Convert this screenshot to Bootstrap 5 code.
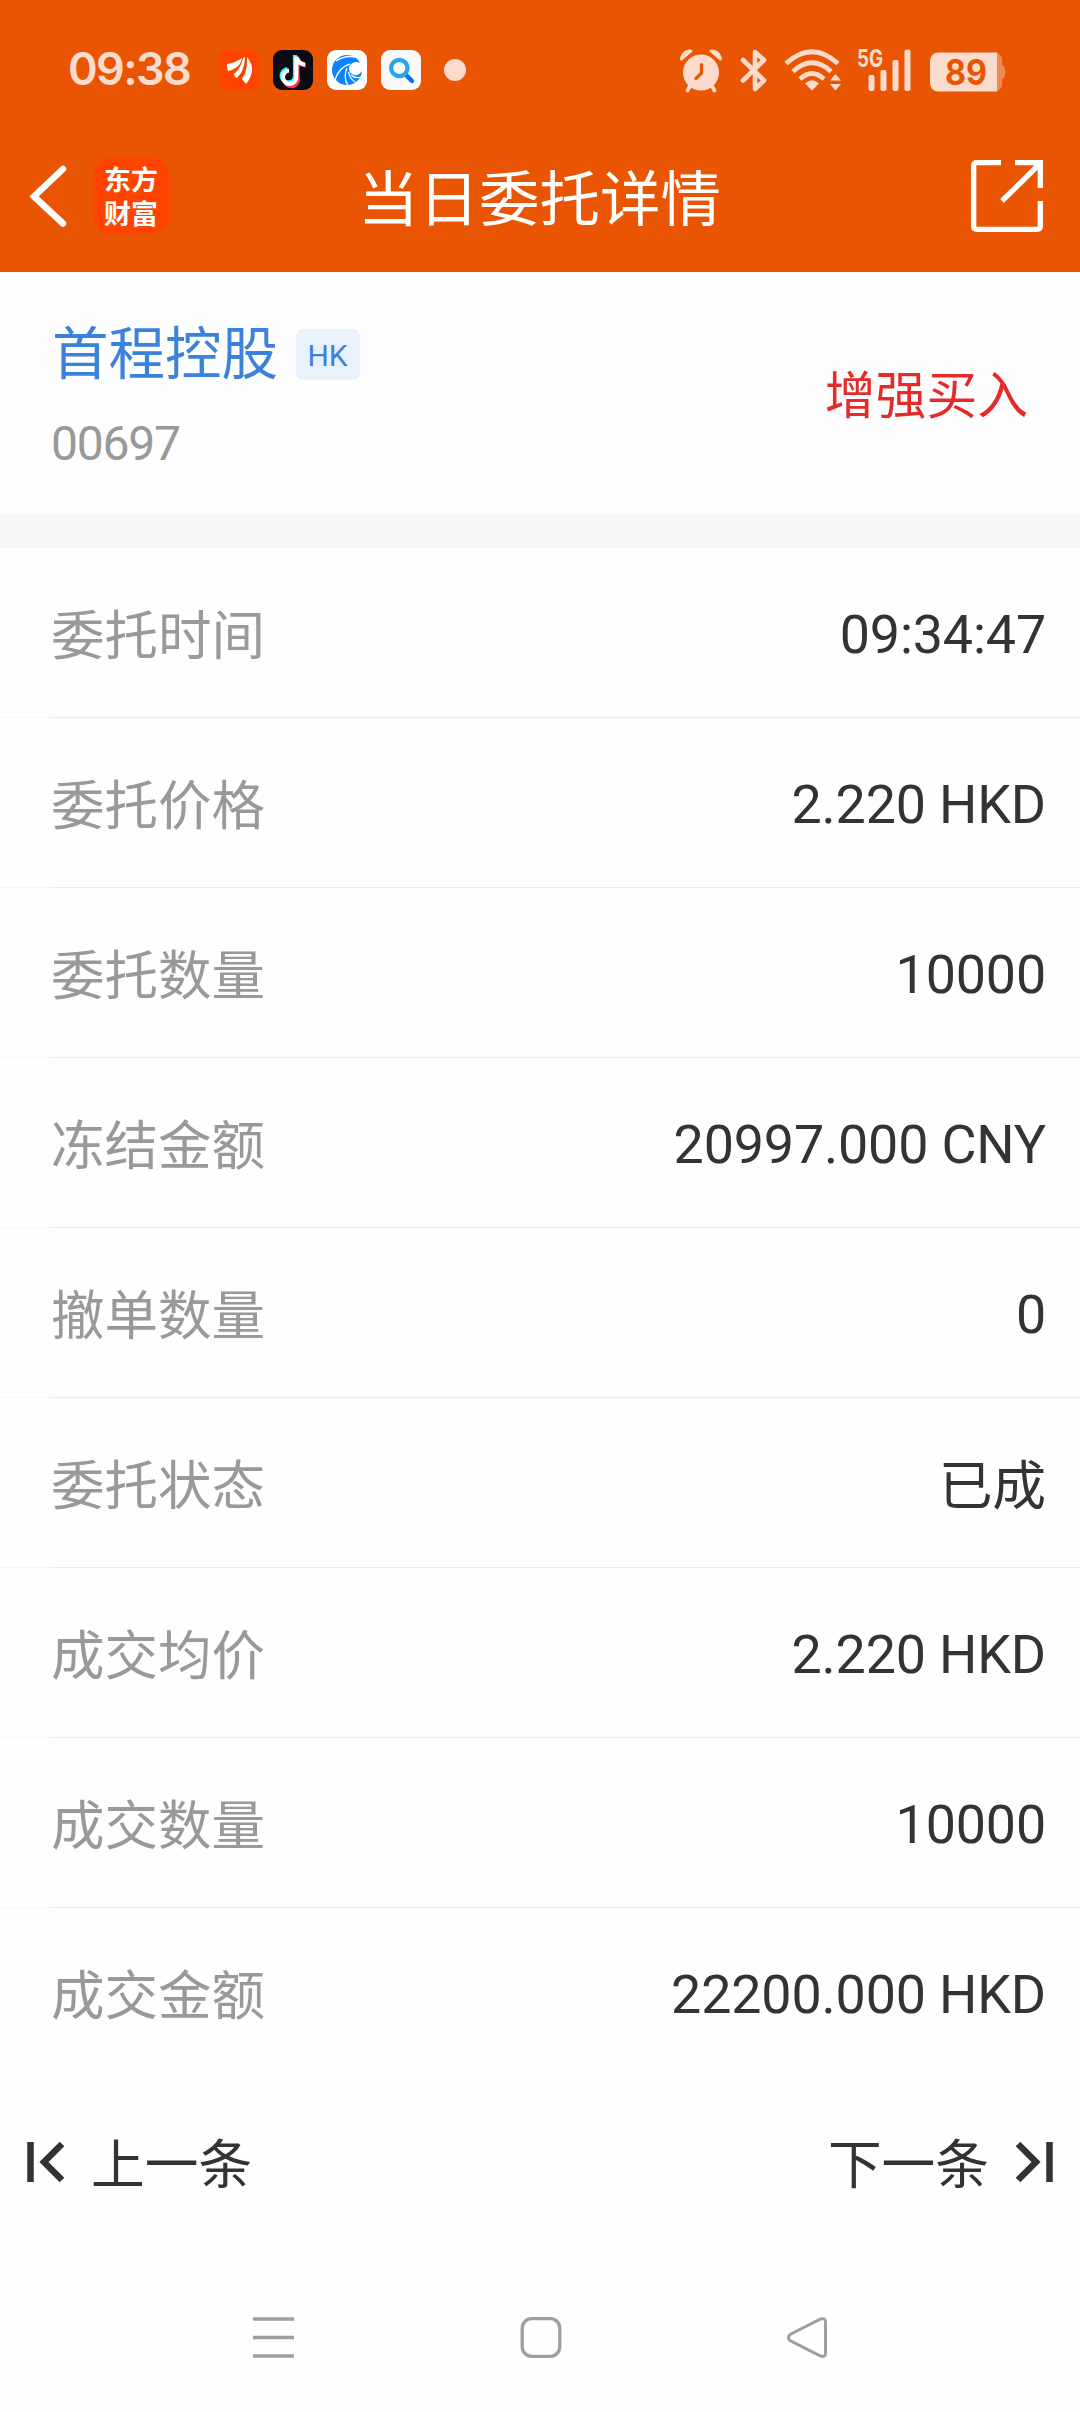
<!DOCTYPE html>
<html lang="zh-CN">
<head>
<meta charset="utf-8">
<meta name="viewport" content="width=device-width, initial-scale=1">
<title>当日委托详情</title>
<link href="https://cdn.jsdelivr.net/npm/bootstrap@5.3.0/dist/css/bootstrap.min.css" rel="stylesheet">
<style>
  body { font-family: Roboto, "Noto Sans CJK SC", sans-serif; background: #fefefe; color: #333; width: 1080px; height: 2412px; overflow: hidden; line-height: 1; }
  svg { display: block; flex: none; overflow: visible; }
  .top-area { background: #ea5504; height: 272px; }
  .status-bar { height: 112px; padding: 31px 75px 0 68px; color: #fbdccc; }
  .clock { font-family: Inter, sans-serif; font-weight: 600; font-size: 45px; letter-spacing: -1.6px; width: 151px; line-height: 80px; margin-top: -2px; }
  .status-bar svg text { font-family: Inter, Roboto, sans-serif; }
  .title-bar { height: 160px; padding: 0 37px 0 30px; }
  .title-side { width: 200px; }
  .title-text { font-size: 60.5px; line-height: 80px; margin: 49px 1px 0 0; }
  .brand-tile { width: 76px; height: 76px; border-radius: 18px; background: #ff4400; font-size: 27px; line-height: 34px; font-weight: 700; font-family: "Noto Sans CJK SC", sans-serif; margin-left: 26px; padding-top: 4px; }
  .stock-head { height: 242px; padding: 8px 52px 0; }
  .stock-name { font-size: 56.500px; line-height: 64px; color: #3a82dc; }
  .hk-tag { width: 64px; height: 51px; border-radius: 7px; background: #e9f1fc; color: #3a82dc; font-size: 30px; margin-left: 18px; padding: 2px 1px 0 0; }
  .stock-code { font-size: 48px; letter-spacing: -1.2px; line-height: 56px; color: #999; margin: 29px 0 0 -1px; }
  .side-text { font-size: 50.8px; color: #e52a2a; }
  .band { height: 34px; background: #f6f8fa; }
  .detail-row { height: 170px; padding: 5px 34px 0 51px; font-size: 53.8px; letter-spacing: -.15px; border-bottom: 1px solid #ececec; border-image: linear-gradient(to right, #f6f6f6 51px, #ececec 51px) 1; }
  .detail-row:last-child { border-color: transparent; border-image: none; }
  .detail-label { font-size: 53.5px; letter-spacing: 0; color: #999; padding-top: 4px; }
  .detail-cjk { padding-top: 3px; }
  .pager { height: 168px; padding: 0 27px; font-size: 53.7px; }
  .pager span { padding-top: 8px; }
  .nav-keys { height: 166px; padding: 71px 252px 0 253px; }
</style>
</head>
<body>
<header class="top-area text-white">
  <div class="status-bar d-flex align-items-start justify-content-between">
    <div class="d-flex align-items-center">
      <span class="clock">09:38</span>
      <div class="d-flex align-items-center" style="gap:14px">
        <svg width="40" height="40" viewBox="0 0 40 40"><rect width="40" height="40" rx="9" fill="#ff4400"/><g fill="#fff"><path d="M8 14Q16 13 23 8Q22 14 18 17Q14 20 9 21Q8 18 8 14Z"/><path d="M24 8L26 7Q26 15 22 23L18 28Q16 28 15 24Q22 18 24 8Z"/><path d="M28 7Q33 13 33 19Q33 27 27 34L23 29Q29 20 28 7Z"/></g></svg>
        <svg width="40" height="40" viewBox="0 0 40 40"><rect width="40" height="40" rx="9" fill="#0b0a15"/><g fill="none" stroke-width="4.200"><path stroke="#25f4ee" d="M22 5V26A6.700 6.700 0 1 1 14.500 19M22 7Q23 13 30 13.500"/><path stroke="#fe2c55" d="M24.500 8V27A6.700 6.700 0 0 1 12 32M25 9Q27 15 33 15.500"/><path stroke="#fff" d="M23.300 6.500V26.500A6.700 6.700 0 1 1 16 20.500M23.300 7Q25 14 32 14.500"/></g></svg>
        <svg width="40" height="40" viewBox="0 0 40 40"><rect width="40" height="40" rx="9" fill="#fff"/><path fill="#0a84ff" d="M33 13Q29 5 20 5A15 15 0 1 0 35 21Q32 26 27 25Q21 23 22 17Q26 10 33 13Z"/><g fill="none" stroke="#fff" stroke-width="1.300"><path d="M23 14Q12 17 8 30M20 18Q16 27 21 36M21.500 22Q23 30 30 33M24 25Q28 29 34 27M9 11Q18 5 28 7"/></g></svg>
        <svg width="40" height="40" viewBox="0 0 40 40"><rect width="40" height="40" rx="9" fill="#fafafa"/><path d="M25 25L31 31" stroke="#0873e8" stroke-width="4.500" stroke-linecap="round"/><circle cx="18.300" cy="18" r="8.200" fill="#fafafa" stroke="#25a5ef" stroke-width="4.200"/></svg>
        <svg width="32" height="22" viewBox="0 0 32 22"><circle cx="20" cy="11" r="11" fill="#fbdccc"/></svg>
      </div>
    </div>
    <div class="d-flex align-items-center" style="height:78px">
      <svg width="42" height="43" viewBox="0 0 42 43" fill="#fbdccc"><circle cx="21" cy="23.500" r="18"/><path d="M0 11C0 4 7-1 12 1L13 2L2 11.500ZM42 11C42 4 35-1 30 1L29 2L40 11.500Z"/><path d="M10 37L7.500 41.500M32 37L34.500 41.500" stroke="#fbdccc" stroke-width="3.800" stroke-linecap="round"/><path d="M21.500 15.500V24L16 29.500" fill="none" stroke="#ea5504" stroke-width="3.200" stroke-linecap="round"/></svg>
      <svg style="margin:0 16px 0 18px" width="28" height="43" viewBox="0 0 28 43" fill="none" stroke="#fbdccc" stroke-width="4.600" stroke-linejoin="round" stroke-linecap="round"><path d="M3 11L24 31.500L15 40V3L24 11L3 31.500"/></svg>
      <svg width="58" height="42" viewBox="0 0 58 42"><g fill="none" stroke="#fbdccc" stroke-width="4.600"><path d="M2 14.500Q28 -9 54 14.500"/><path d="M9 22.500Q28 5 47 22.500"/><path d="M16 30Q28 19 40 30"/></g><path fill="#fbdccc" d="M21 34.500Q28 28 35 34.500L28 41.500ZM51.500 25L57 31.500H46ZM51.500 41.500L46 35H57Z"/></svg>
      <svg style="margin:0 18px 0 15px" width="55" height="42" viewBox="0 0 55 42" fill="#fbdccc"><text x="0" y="17.500" font-size="24" font-weight="700" textLength="26" lengthAdjust="spacingAndGlyphs">5G</text><rect x="11.500" y="26" width="6" height="16" rx="2"/><rect x="23.500" y="21" width="6" height="21" rx="2"/><rect x="35.500" y="11" width="6" height="31" rx="2"/><rect x="47.500" y="0.500" width="6" height="41.500" rx="2"/></svg>
      <svg class="mt-1" width="75" height="40" viewBox="0 0 75 40"><path d="M66 0.500Q72 2 72 9V13Q75 14 75 17V23Q75 26 72 27V31Q72 38 66 39.500Z" fill="#f08b55"/><path d="M9 .500H67V39.500H9Q0 39.500 0 30V10Q0 .500 9 .500Z" fill="#fbdccc"/><text x="15" y="32.500" font-size="36" font-weight="700" fill="#ea5504" textLength="42" lengthAdjust="spacingAndGlyphs">89</text></svg>
    </div>
  </div>
  <div class="title-bar d-flex align-items-start justify-content-between">
    <div class="title-side d-flex align-items-center" style="height:167px">
      <svg width="37" height="62" viewBox="0 0 37 62"><path d="M33 4L4 31.500L33 58.500" fill="none" stroke="#fff" stroke-width="6.500" stroke-linecap="round"/></svg>
      <div class="brand-tile text-center">东方<br>财富</div>
    </div>
    <h1 class="title-text fw-normal">当日委托详情</h1>
    <div class="title-side d-flex justify-content-end" style="padding-top:48px;width:193px">
      <svg width="72" height="72" viewBox="0 0 72 72" fill="none" stroke="#fff" stroke-width="5.300"><path d="M30 2.700H6Q2.700 2.700 2.700 6V66Q2.700 69.300 6 69.300H66Q69.300 69.300 69.300 66V41M44 2.700H69.300V28M31 41L69 3.500"/></svg>
    </div>
  </div>
</header>
<section class="stock-head d-flex align-items-center justify-content-between">
  <div>
    <div class="d-flex align-items-center"><span class="stock-name">首程控股</span><span class="hk-tag d-flex align-items-center justify-content-center">HK</span></div>
    <div class="stock-code">00697</div>
  </div>
  <div class="side-text">增强买入</div>
</section>
<div class="band"></div>
<main>
  <div class="detail-row d-flex align-items-center justify-content-between"><span class="detail-label">委托时间</span><span>09:34:47</span></div>
  <div class="detail-row d-flex align-items-center justify-content-between"><span class="detail-label">委托价格</span><span>2.220 HKD</span></div>
  <div class="detail-row d-flex align-items-center justify-content-between"><span class="detail-label">委托数量</span><span>10000</span></div>
  <div class="detail-row d-flex align-items-center justify-content-between"><span class="detail-label">冻结金额</span><span>20997.000 CNY</span></div>
  <div class="detail-row d-flex align-items-center justify-content-between"><span class="detail-label">撤单数量</span><span>0</span></div>
  <div class="detail-row d-flex align-items-center justify-content-between"><span class="detail-label">委托状态</span><span class="detail-cjk">已成</span></div>
  <div class="detail-row d-flex align-items-center justify-content-between"><span class="detail-label">成交均价</span><span>2.220 HKD</span></div>
  <div class="detail-row d-flex align-items-center justify-content-between"><span class="detail-label">成交数量</span><span>10000</span></div>
  <div class="detail-row d-flex align-items-center justify-content-between"><span class="detail-label">成交金额</span><span>22200.000 HKD</span></div>
</main>
<div class="pager d-flex align-items-center justify-content-between">
  <div class="d-flex align-items-center" style="gap:26px"><svg width="38" height="40" viewBox="0 0 38 40" fill="none" stroke="#333" stroke-width="6.500"><path d="M3.500 0V40M35 2L17 20L35 38"/></svg><span>上一条</span></div>
  <div class="d-flex align-items-center" style="gap:26px"><span>下一条</span><svg width="38" height="40" viewBox="0 0 38 40" fill="none" stroke="#333" stroke-width="6.500"><path d="M34.500 0V40M3 2L21 20L3 38"/></svg></div>
</div>
<nav class="nav-keys d-flex justify-content-between align-items-start">
  <svg width="41" height="41" viewBox="0 0 41 41" fill="none" stroke="#9e9e9e" stroke-width="3.500"><path d="M0 2H41M0 20.500H41M0 39H41"/></svg>
  <svg width="41" height="41" viewBox="0 0 41 41" fill="none" stroke="#9e9e9e" stroke-width="3.300"><rect x="2.200" y="1.700" width="37.600" height="37.600" rx="9.500"/></svg>
  <svg width="41" height="41" viewBox="0 0 41 41" fill="none" stroke="#9e9e9e" stroke-width="3"><path d="M3 17.500L33.500 2Q38.500 .500 38.500 5V36Q38.500 40.500 33.500 39L3 23.500Q0 20.500 3 17.500Z"/></svg>
</nav>
<script src="https://cdn.jsdelivr.net/npm/bootstrap@5.3.0/dist/js/bootstrap.bundle.min.js"></script>
</body>
</html>
